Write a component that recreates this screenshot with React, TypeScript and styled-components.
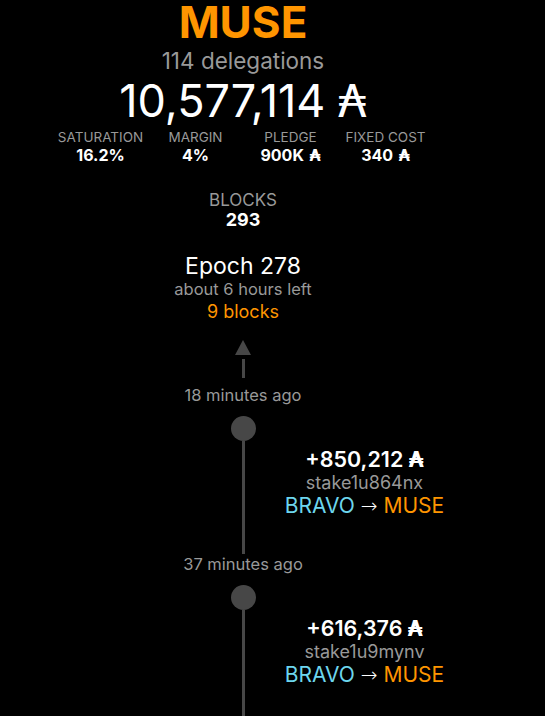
import React from "react";
import styled, { createGlobalStyle } from "styled-components";

const GlobalStyle = createGlobalStyle`
  html, body {
    margin: 0;
    padding: 0;
    background: #000;
  }
  body {
    font-family: "Inter", "DejaVu Sans", sans-serif;
    color: #fff;
  }
`;

const Page = styled.div`
  width: 486px;
  display: flex;
  flex-direction: column;
  align-items: center;
  text-align: center;
`;

const PoolName = styled.h1`
  margin: 0;
  font-size: 44px;
  line-height: 44px;
  font-weight: 700;
  color: #ff9500;
`;

const Delegations = styled.div`
  margin-top: 5px;
  font-size: 22.5px;
  line-height: 24px;
  color: #999;
`;

const Stake = styled.div`
  margin-top: 3px;
  font-size: 45px;
  line-height: 50px;
  font-weight: 400;
`;

const Ada = styled.span`
  font-family: "DejaVu Sans", sans-serif;
`;

const StatsRow = styled.div`
  display: grid;
  grid-template-columns: repeat(4, 95px);
  margin-top: 2px;
`;

const Stat = styled.div`
  display: flex;
  flex-direction: column;
  align-items: center;
`;

const Label = styled.div<{ $size?: number }>`
  font-size: ${(p) => p.$size ?? 13.5}px;
  line-height: ${(p) => Math.round((p.$size ?? 13.5) + 3)}px;
  color: #999;
  text-transform: uppercase;
`;

const Value = styled.div<{ $size?: number }>`
  font-size: ${(p) => p.$size ?? 16}px;
  line-height: ${(p) => (p.$size ?? 16) + 2}px;
  font-weight: 700;
  color: #fff;
`;

const Blocks = styled(Stat)`
  margin-top: 25px;
`;

const Epoch = styled.div`
  margin-top: 23px;
  display: flex;
  flex-direction: column;
  align-items: center;
`;

const EpochTitle = styled.div`
  font-size: 23px;
  line-height: 26px;
`;

const Muted = styled.div<{ $size?: number }>`
  font-size: ${(p) => p.$size ?? 16.5}px;
  line-height: ${(p) => Math.round((p.$size ?? 16.5) + 4)}px;
  color: #999;
`;

const Orange = styled.span`
  color: #ff9500;
`;

const Cyan = styled.span`
  color: #6dd6ee;
`;

const EpochBlocks = styled.div`
  margin-top: 1px;
  font-size: 18px;
  line-height: 22px;
  color: #ff9500;
`;

const Arrow = styled.div`
  margin-top: 17px;
  display: flex;
  flex-direction: column;
  align-items: center;
  &::before {
    content: "";
    width: 0;
    height: 0;
    border-left: 8px solid transparent;
    border-right: 8px solid transparent;
    border-bottom: 15px solid #474747;
  }
  &::after {
    content: "";
    margin-top: 4px;
    width: 3px;
    height: 19px;
    background: #474747;
  }
`;

const Timeline = styled.div`
  display: flex;
  flex-direction: column;
  margin-top: 7px;
  width: 100%;
`;

const Entry = styled.div`
  display: grid;
  grid-template-columns: 1fr 1fr;
  grid-template-rows: auto auto;
`;

const Time = styled(Muted)`
  grid-column: 1 / 3;
  height: 21px;
`;

const Track = styled.div`
  grid-column: 1 / 3;
  grid-row: 2;
  display: flex;
  flex-direction: column;
  align-items: center;
  padding-top: 10px;
  &::before {
    content: "";
    width: 25px;
    height: 25px;
    border-radius: 50%;
    background: #474747;
  }
  &::after {
    content: "";
    width: 3px;
    height: 113px;
    background: #474747;
  }
`;

const Delegation = styled.div`
  grid-column: 2;
  grid-row: 2;
  padding-top: 41px;
  display: flex;
  flex-direction: column;
  align-items: center;
`;

const Amount = styled.div`
  font-size: 21.5px;
  line-height: 24px;
  font-weight: 600;
`;

const Route = styled.div`
  font-size: 21px;
  line-height: 24px;
`;

const RouteArrow = styled.span`
  color: #fff;
  font-family: "DejaVu Sans", sans-serif;
  font-size: 20px;
  font-weight: 300;
`;

const stats = [
  { label: "Saturation", value: "16.2%" },
  { label: "Margin", value: "4%" },
  { label: "Pledge", value: "900K", ada: true },
  { label: "Fixed cost", value: "340", ada: true },
];

const delegations = [
  { time: "18 minutes ago", amount: "+850,212", address: "stake1u864nx", from: "BRAVO", to: "MUSE" },
  { time: "37 minutes ago", amount: "+616,376", address: "stake1u9mynv", from: "BRAVO", to: "MUSE" },
];

const App: React.FC = () => {
  return (
    <>
      <GlobalStyle />
      <Page>
        <PoolName>MUSE</PoolName>
        <Delegations>114 delegations</Delegations>
        <Stake>
          10,577,114 <Ada>₳</Ada>
        </Stake>
        <StatsRow>
          {stats.map((s) => (
            <Stat key={s.label}>
              <Label>{s.label}</Label>
              <Value>
                {s.value}
                {s.ada && <Ada> ₳</Ada>}
              </Value>
            </Stat>
          ))}
        </StatsRow>
        <Blocks>
          <Label $size={17}>Blocks</Label>
          <Value $size={18}>293</Value>
        </Blocks>
        <Epoch>
          <EpochTitle>Epoch 278</EpochTitle>
          <Muted>about 6 hours left</Muted>
          <EpochBlocks>9 blocks</EpochBlocks>
        </Epoch>
        <Arrow />
        <Timeline>
          {delegations.map((d) => (
            <Entry key={d.address}>
              <Time>{d.time}</Time>
              <Track />
              <Delegation>
                <Amount>
                  {d.amount} <Ada>₳</Ada>
                </Amount>
                <Muted $size={18}>{d.address}</Muted>
                <Route>
                  <Cyan>{d.from}</Cyan> <RouteArrow>→</RouteArrow> <Orange>{d.to}</Orange>
                </Route>
              </Delegation>
            </Entry>
          ))}
        </Timeline>
      </Page>
    </>
  );
};

export default App;
